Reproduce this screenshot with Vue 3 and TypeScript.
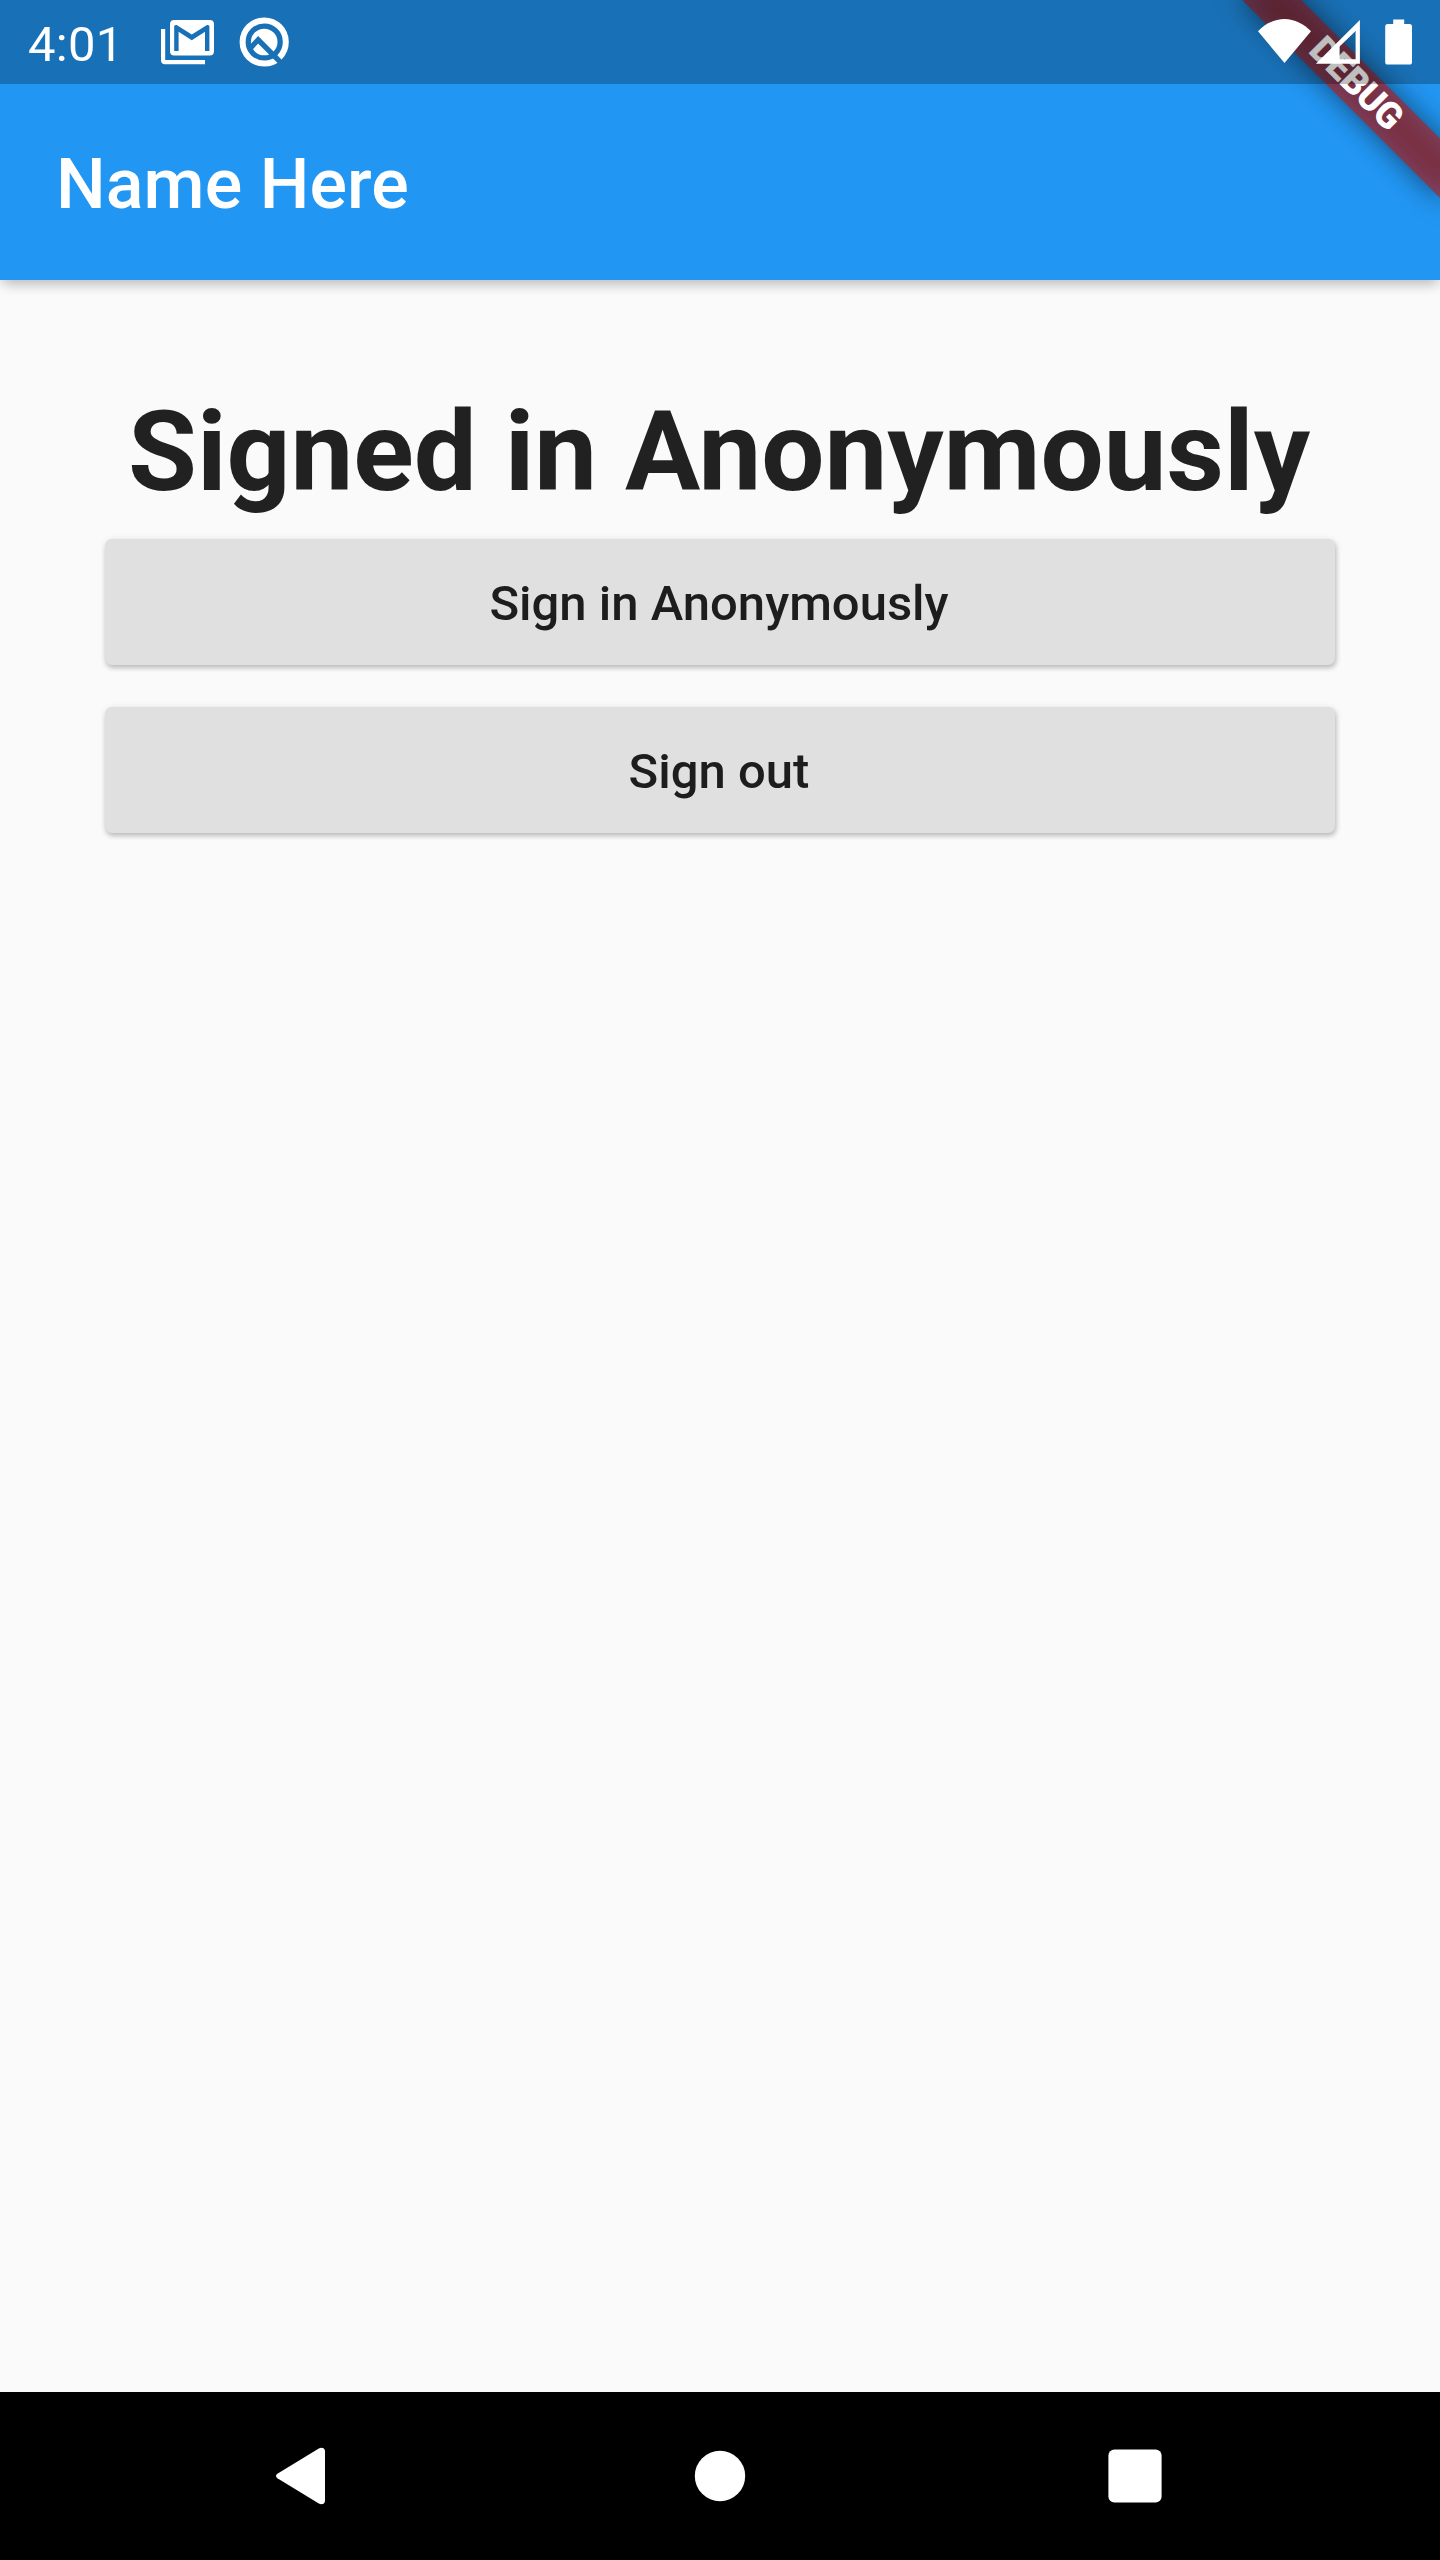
<script setup lang="ts">
import { ref } from 'vue'

const title = 'Name Here'
const clock = '4:01'
const status = ref('Signed in Anonymously')

const actions: { label: string; result: string }[] = [
  { label: 'Sign in Anonymously', result: 'Signed in Anonymously' },
  { label: 'Sign out', result: 'Signed out' },
]
</script>

<template>
  <div class="screen">
    <header class="app-bar">
      <h1 class="title">{{ title }}</h1>
    </header>

    <main class="content">
      <h2 class="headline">{{ status }}</h2>
      <button
        v-for="action in actions"
        :key="action.label"
        class="raised-button"
        type="button"
        @click="status = action.result"
      >
        {{ action.label }}
      </button>
    </main>

    <nav class="nav-bar">
      <svg class="nav-icon" viewBox="0 0 60 60" aria-label="Back">
        <path
          d="M7.4 27.8 L48.8 2.5 Q51 1.2 53.5 2.2 Q55 3.1 55 5.3 V54.7 Q55 56.9 53.5 57.8 Q51 58.8 48.8 57.5 L7.4 32.2 Q4.6 30 7.4 27.8Z"
        />
      </svg>
      <svg class="nav-icon" viewBox="0 0 60 60" aria-label="Home">
        <circle cx="30" cy="30" r="25.2" />
      </svg>
      <svg class="nav-icon" viewBox="0 0 60 60" aria-label="Overview">
        <rect x="3.4" y="3.4" width="53.2" height="53.2" rx="6" />
      </svg>
    </nav>

    <div class="banner-layer">
      <div class="banner">
        <div class="banner-shadow"></div>
        <div class="banner-strip">DEBUG</div>
      </div>
    </div>

    <div class="status-bar">
      <span class="clock">{{ clock }}</span>
      <svg class="gmail" viewBox="0 0 56 56" width="56" height="56">
        <path d="M1 15 H5.2 V46 H45 V50.3 H5 Q1 50.3 1 46.3Z" />
        <path
          fill-rule="evenodd"
          d="M14.2 6 H49.8 Q54 6 54 10.2 V37.3 Q54 41.5 49.8 41.5 H14.2 Q10 41.5 10 37.3 V10.2 Q10 6 14.2 6Z
             M14.2 37 H18.6 V17.8 L31.8 26.3 L45 17.8 V37 H49.4 V12 Q48.5 10.6 47 11 L31.8 20.6 L16.6 11 Q15.1 10.6 14.2 12Z"
        />
      </svg>
      <svg class="quick" viewBox="0 0 56 56" width="56" height="56">
        <defs>
          <mask id="quick-cut">
            <rect width="56" height="56" fill="#fff" />
            <path d="M14 34.5 L22.2 25.8 L49.6 53.4" fill="none" stroke="#000" stroke-width="5.2" />
          </mask>
        </defs>
        <g mask="url(#quick-cut)">
          <circle cx="28.2" cy="28" r="21.6" fill="none" stroke="#fff" stroke-width="6" />
          <circle cx="28.2" cy="28" r="13.3" />
        </g>
      </svg>
      <span class="spacer"></span>
      <svg class="wifi" viewBox="0 0 54 46" width="54" height="46">
        <path d="M27.5 45 L1 13.3 C8 6 17.5 1 27.5 1 S47 6 54 13.3Z" />
      </svg>
      <svg class="signal" viewBox="0 0 46 46" width="46" height="46">
        <path fill-rule="evenodd" d="M44.9 2 V45.7 H.9Z M40.6 13 L24.6 28.5 V41.2 H40.6Z" />
      </svg>
      <svg class="battery" viewBox="0 0 28 46" width="28" height="46">
        <path
          d="M8.2 1.4 H19.2 V6 H24.5 Q27 6 27 8.5 V44 Q27 46.6 24.5 46.6 H2.7 Q.2 46.6 .2 44 V8.5 Q.2 6 2.7 6 H8.2Z"
        />
      </svg>
    </div>
  </div>
</template>

<style>
body {
  margin: 0;
}
</style>

<style scoped>
.screen {
  position: relative;
  display: flex;
  flex-direction: column;
  width: 1440px;
  height: 2560px;
  overflow: hidden;
  background: #fafafa;
  color: rgba(0, 0, 0, 0.87);
  font-family: Roboto, sans-serif;
}

.app-bar {
  display: flex;
  align-items: center;
  flex: none;
  box-sizing: border-box;
  height: 280px;
  padding: 87px 56px 0;
  background: #2196f3;
  box-shadow:
    0 7px 13px -3.5px rgba(0, 0, 0, 0.18),
    0 4px 12px rgba(0, 0, 0, 0.11);
}

.title {
  margin: 0;
  color: #fff;
  font-size: 70px;
  font-weight: 500;
  letter-spacing: 0.1px;
  line-height: 82px;
}

.content {
  display: flex;
  flex: 1;
  flex-direction: column;
  gap: 42px;
  padding: 105px 105px 0;
}

.headline {
  margin: 0 0 -21px;
  padding-right: 2px;
  font-size: 112px;
  font-weight: 700;
  line-height: 133px;
  text-align: center;
  white-space: nowrap;
}

.raised-button {
  height: 126px;
  padding: 2px 2px 0 0;
  border: 0;
  border-radius: 7px;
  background: #e0e0e0;
  box-shadow:
    1px 3px 5px rgba(0, 0, 0, 0.2),
    1px 1px 7px rgba(0, 0, 0, 0.1);
  color: rgba(0, 0, 0, 0.87);
  font-family: inherit;
  font-size: 49px;
  font-weight: 500;
  line-height: 57px;
}

.nav-bar {
  display: flex;
  flex: none;
  align-items: center;
  justify-content: space-between;
  box-sizing: border-box;
  height: 168px;
  padding: 0 275px 0 270px;
  background: #000;
}

.nav-icon {
  width: 60px;
  height: 60px;
  fill: #fff;
}

.nav-icon:nth-child(2) {
  margin-left: 5px;
}

.banner-layer {
  position: absolute;
  top: 0;
  right: 0;
  width: 280px;
  height: 280px;
  overflow: hidden;
}

/* Ribbon is laid out from the top-right corner, then turned around it. */
.banner {
  position: absolute;
  top: 98px;
  left: 140px;
  width: 280px;
  height: 42px;
  transform: rotate(45deg);
  transform-origin: 140px -98px;
}

.banner-shadow,
.banner-strip {
  position: absolute;
  inset: 0;
}

.banner-shadow {
  background: rgba(0, 0, 0, 0.5);
  filter: blur(13.9px);
}

.banner-strip {
  background: rgba(183, 28, 28, 0.627);
  color: #fff;
  font-size: 35.7px;
  font-weight: 700;
  line-height: 40px;
  text-align: center;
  -webkit-text-stroke: 0.9px #fff;
}

.status-bar {
  position: absolute;
  top: 0;
  left: 0;
  display: flex;
  box-sizing: border-box;
  width: 1440px;
  height: 84px;
  padding: 0 28px;
  background: rgba(0, 0, 0, 0.25);
  color: #fff;
}

.status-bar svg {
  flex: none;
  fill: #fff;
  overflow: visible;
}

.clock {
  width: 132px;
  font-size: 49px;
  letter-spacing: 0.3px;
  line-height: 89px;
}

.gmail {
  margin-top: 14px;
}

.quick {
  margin: 14px 0 0 20px;
}

.spacer {
  flex: 1;
}

.wifi {
  margin: 18px 4px 0 0;
}

.signal {
  margin: 18px 24px 0 0;
}

.battery {
  margin-top: 18px;
  margin-right: -1px;
}
</style>
